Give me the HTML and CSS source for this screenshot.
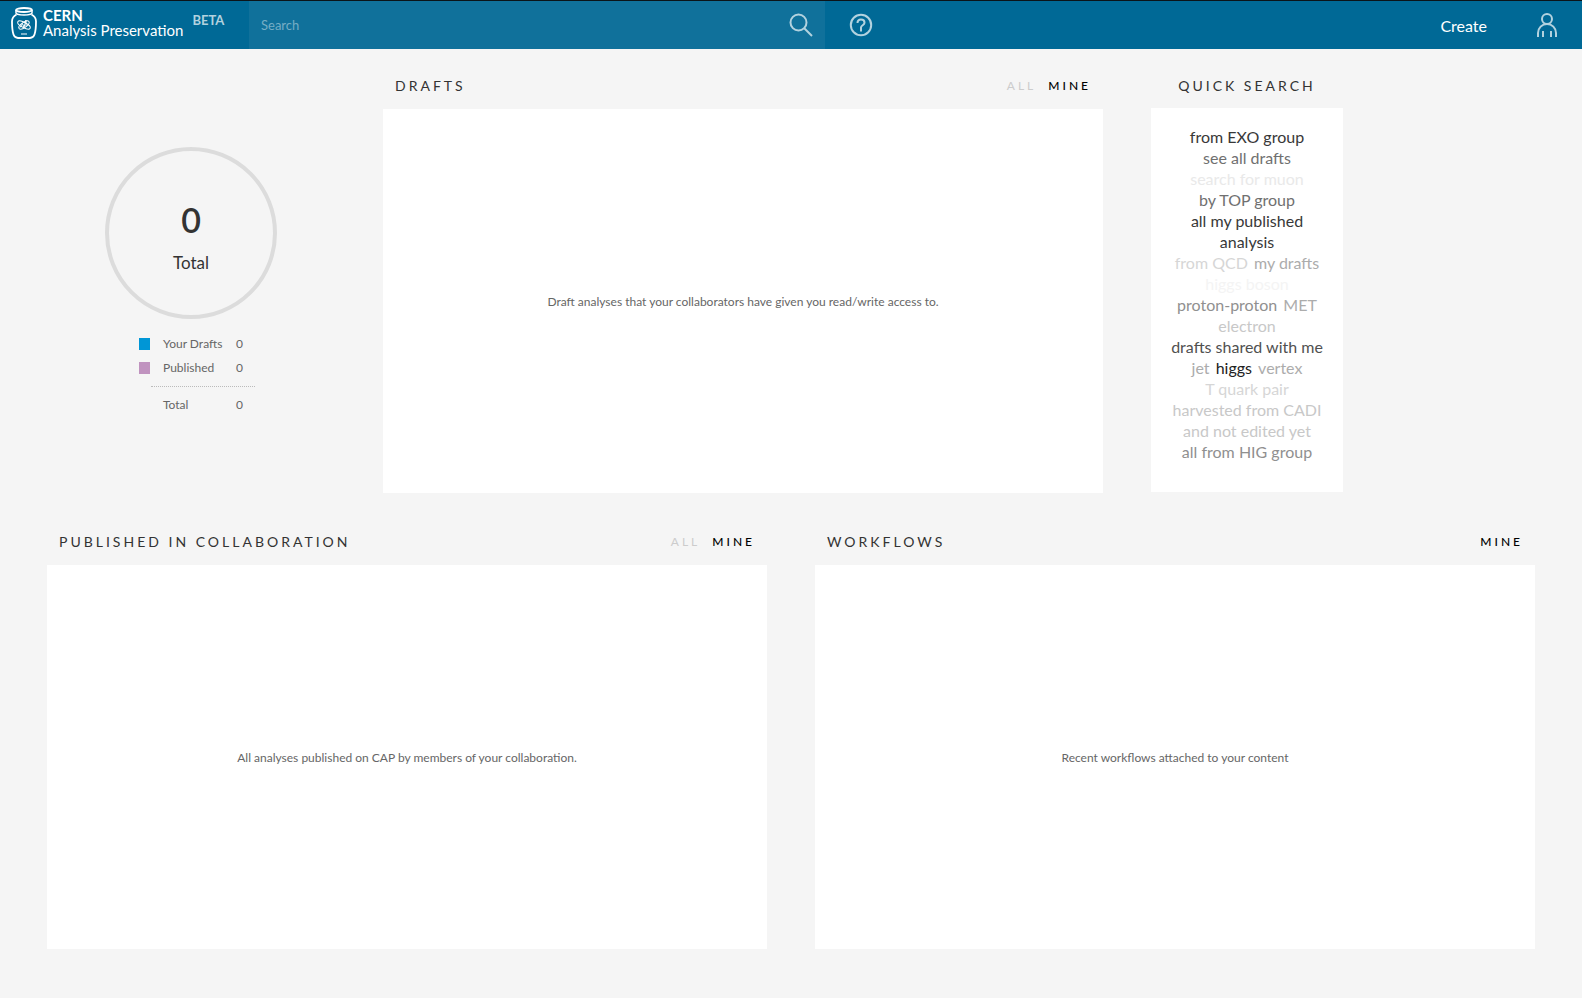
FILE: index.html
```html
<!DOCTYPE html>
<html lang="en">
<head>
<meta charset="utf-8">
<meta name="viewport" content="width=device-width, initial-scale=1">
<title>CERN Analysis Preservation</title>
<link rel="stylesheet" href="styles.css">
</head>
<body>
<header class="topbar">
  <a class="brand" href="#">
    <svg class="brand-logo" viewBox="0 0 26 32" aria-hidden="true">
      <g fill="none" stroke="#fff">
        <ellipse cx="13" cy="3" rx="8" ry="2" stroke-width="1.8"/>
        <path d="M5 3v3c0 1 3.500 2 8 2s8-1 8-2V3" stroke-width="1.500"/>
        <path d="M5.500 7.500C2.500 9 1 11.500 1 14.500c0 5 .5 10 1.500 13S5 31 7 31h12c2 0 3.500-.5 4.500-3.500s1.500-8 1.500-13c0-3-1.500-5.500-4.500-7" stroke-width="1.800"/>
        <g stroke-width="1">
          <ellipse cx="13" cy="18" rx="7" ry="2.600" transform="rotate(28 13 18)"/>
          <ellipse cx="13" cy="18" rx="6" ry="2.600" transform="rotate(-35 13 18)"/>
          <path d="M9 20.500l2.500-4 1.500 4 2-7.500v6.500M10 27h6"/>
        </g>
      </g>
    </svg>
    <span class="brand-text"><strong>CERN</strong><span>Analysis Preservation</span></span>
    <span class="brand-beta">BETA</span>
  </a>
  <form class="search" role="search">
    <input class="search-input" type="search" placeholder="Search" aria-label="Search">
    <button class="icon-button" type="button" aria-label="Submit search">
      <svg viewBox="0 0 24 24" width="24" height="24" aria-hidden="true"><g fill="none" stroke="currentColor" stroke-width="2"><circle cx="9.500" cy="9.500" r="8"/><path d="M15 15l8 8"/></g></svg>
    </button>
  </form>
  <button class="icon-button help" type="button" aria-label="Help">
    <svg viewBox="0 0 24 24" width="24" height="24" aria-hidden="true"><g fill="none" stroke="currentColor" stroke-width="2"><circle cx="12" cy="12" r="10.200"/><path d="M8.500 10C8.500 7.500 10 6.500 12 6.500s3.500 1.200 3.500 3.200c0 2.500-3.500 2.500-3.500 4.800v4"/></g></svg>
  </button>
  <nav class="actions">
    <a class="create" href="#">Create</a>
    <button class="icon-button" type="button" aria-label="Account">
      <svg viewBox="0 0 24 24" width="24" height="24" aria-hidden="true"><g fill="none" stroke="currentColor" stroke-width="2"><circle cx="12" cy="6" r="5"/><path d="M3 24v-4c0-5 4-9 9-9s9 4 9 9v4M8 24v-6M16 24v-6"/></g></svg>
    </button>
  </nav>
</header>

<main class="dashboard">
  <div class="row">
    <section class="stats" aria-label="Totals">
      <div class="meter">
        <span class="meter-value">0</span>
        <span class="meter-label">Total</span>
      </div>
      <dl class="legend">
        <div class="legend-row"><span class="swatch swatch-drafts"></span><dt>Your Drafts</dt><dd>0</dd></div>
        <div class="legend-row"><span class="swatch swatch-published"></span><dt>Published</dt><dd>0</dd></div>
        <div class="legend-total"><dt>Total</dt><dd>0</dd></div>
      </dl>
    </section>

    <section class="panel">
      <div class="panel-head">
        <h2 class="panel-title">DRAFTS</h2>
        <div class="tabs"><button class="tab" type="button">ALL</button><button class="tab tab-active" type="button">MINE</button></div>
      </div>
      <div class="panel-body">Draft analyses that your collaborators have given you read/write access to.</div>
    </section>

    <section class="quick">
      <h2 class="panel-title quick-title">QUICK SEARCH</h2>
      <div class="quick-body">
        <a class="t1" href="#">from EXO group</a>
        <a class="t3" href="#">see all drafts</a>
        <a class="t8" href="#">search for muon</a>
        <a class="t3" href="#">by TOP group</a>
        <a class="t1" href="#">all my published analysis</a>
        <a class="t7" href="#">from QCD</a>
        <a class="t5" href="#">my drafts</a>
        <a class="t9" href="#">higgs boson</a>
        <a class="t4" href="#">proton-proton</a>
        <a class="t5" href="#">MET</a>
        <a class="t6" href="#">electron</a>
        <a class="t2" href="#">drafts shared with me</a>
        <a class="t5" href="#">jet</a>
        <a class="t0" href="#">higgs</a>
        <a class="t5" href="#">vertex</a>
        <a class="t7" href="#">T quark pair</a>
        <a class="t6" href="#">harvested from CADI and not edited yet</a>
        <a class="t4" href="#">all from HIG group</a>
      </div>
    </section>
  </div>

  <div class="row">
    <section class="panel">
      <div class="panel-head">
        <h2 class="panel-title">PUBLISHED IN COLLABORATION</h2>
        <div class="tabs"><button class="tab" type="button">ALL</button><button class="tab tab-active" type="button">MINE</button></div>
      </div>
      <div class="panel-body">All analyses published on CAP by members of your collaboration.</div>
    </section>
    <section class="panel">
      <div class="panel-head">
        <h2 class="panel-title">WORKFLOWS</h2>
        <div class="tabs"><button class="tab tab-active" type="button">MINE</button></div>
      </div>
      <div class="panel-body">Recent workflows attached to your content</div>
    </section>
  </div>
</main>
</body>
</html>
```
FILE: styles.css
```css
* { box-sizing: border-box; }

body {
  margin: 0;
  min-height: 100vh;
  background: #f5f5f5;
  color: #333;
  font-family: Lato, "Open Sans", sans-serif;
  font-size: 16px;
  line-height: 21px;
}

a { color: inherit; text-decoration: none; }
button { font: inherit; color: inherit; background: none; border: 0; padding: 0; cursor: pointer; }
h2, dl, dd { margin: 0; }

.topbar {
  display: flex;
  align-items: stretch;
  height: 49px;
  border-top: 1px solid #0b1419;
  background: #006996;
  color: #fff;
}
.brand { display: flex; width: 249px; padding: 6px 0 0 11px; }
.brand-logo { width: 26px; height: 32px; }
.brand-text {
  display: flex;
  flex-direction: column;
  margin: 1px 9px 0 6px;
  font-size: 15px;
  line-height: 15px;
  white-space: nowrap;
}
.brand-beta { color: #b2d2df; font-size: 13px; font-weight: 700; line-height: 26px; }

.search {
  display: flex;
  align-items: center;
  width: 576px;
  padding: 0 12px;
  background: #10719b;
}
.search-input {
  flex: 1;
  min-width: 0;
  padding: 0;
  border: 0;
  outline: 0;
  background: none;
  color: #fff;
  font: inherit;
  font-size: 13px;
}
.search-input::placeholder { color: #75adc5; opacity: 1; }
.icon-button { display: flex; align-items: center; color: #b2d2df; }
.help { margin-left: 24px; }
.actions { display: flex; align-items: center; gap: 48px; margin-left: auto; padding-right: 23px; }
.create { padding-top: 1px; }

.dashboard { max-width: 1536px; margin: 0 auto; padding-bottom: 25px; }
.row { display: flex; }

.stats {
  display: flex;
  flex-direction: column;
  align-items: center;
  width: 336px;
  padding-top: 98px;
}
.meter {
  display: flex;
  flex-direction: column;
  align-items: center;
  gap: 12px;
  width: 172px;
  height: 172px;
  padding-top: 48px;
  border: 4px solid #dcdcdc;
  border-radius: 50%;
}
.meter-value { font-size: 34px; font-weight: 600; line-height: 42px; }
.meter-label { font-size: 17px; line-height: 20px; }
.legend { width: 104px; margin-top: 13px; color: #666; font-size: 12px; line-height: 24px; }
.legend-row, .legend-total { display: flex; }
.legend-row { align-items: center; }
.swatch { width: 11px; height: 12px; margin-right: 13px; }
.swatch-drafts { background: #0096d6; }
.swatch-published { background: #c093bf; }
.legend dt { flex: 1; white-space: nowrap; }
.legend-total { margin: 6px -12px 0 12px; padding: 6px 12px 0; border-top: 1px dotted #bbb; }

.panel { flex: 1; min-width: 0; padding: 24px 24px 0; }
.panel-head {
  display: flex;
  justify-content: space-between;
  align-items: center;
  height: 36px;
  padding: 0 12px 12px;
}
.row + .row .panel { padding-top: 36px; }
.row .panel:not(:only-child) { max-width: 768px; }
.panel-title { font-size: 14px; font-weight: 400; letter-spacing: 3px; white-space: nowrap; }
.tabs { display: flex; gap: 12px; }
.tab { color: #ccc; font-size: 12px; letter-spacing: 3px; }
.tab-active { color: #000; font-weight: 500; }
.panel-body {
  display: flex;
  align-items: center;
  justify-content: center;
  min-height: 384px;
  background: #fff;
  color: #666;
  font-size: 12px;
  text-align: center;
}

.quick { width: 240px; padding: 24px 24px 0; }
.quick-title { padding-top: 3px; line-height: 20px; margin-bottom: 12px; text-align: center; }
.quick-body {
  min-height: 384px;
  padding: 18px 16px;
  background: #fff;
  text-align: center;
}
.quick-body a { display: inline-block; vertical-align: top; margin: 0 1px; }
.t0 { color: #222; }
.t1 { color: #383838; }
.t2 { color: #505050; }
.t3 { color: #707070; }
.t4 { color: #909090; }
.t5 { color: #acacac; }
.t6 { color: #c8c8c8; }
.t7 { color: #d6d6d6; }
.t8 { color: #e9e9e9; }
.t9 { color: #f4f4f4; }
```
